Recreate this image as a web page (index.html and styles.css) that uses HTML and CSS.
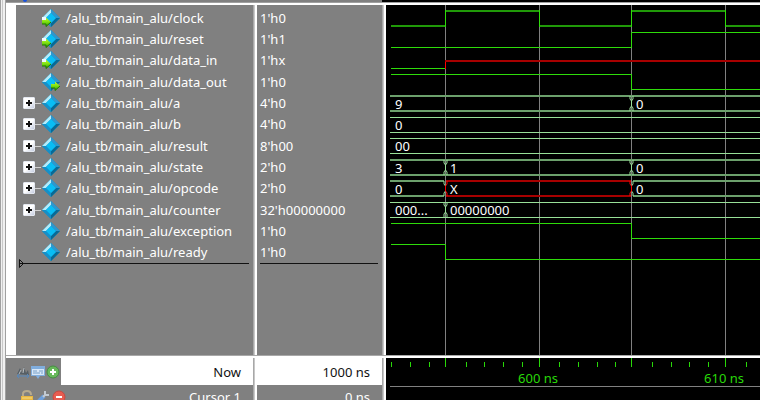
FILE: index.html
```html
<!DOCTYPE html>
<html lang="en">
<head>
<meta charset="utf-8">
<title>Wave</title>
<link rel="stylesheet" href="styles.css">
</head>
<body>
<svg class="defs" aria-hidden="true">
  <defs>
    <linearGradient id="green" x2="0" y2="1"><stop offset="0" stop-color="#c4fa30"/><stop offset=".5" stop-color="#7be010"/><stop offset="1" stop-color="#2b9600"/></linearGradient>
    <symbol id="diamond" viewBox="0 0 20 20">
      <path d="M10 1L1 10l9 9 9-9z" fill="#078fc6"/>
      <path d="M10 1L1 10h4l5-5z" fill="#b4ebfa"/>
      <path d="M10 1l9 9h-4l-5-5z" fill="#3196cc"/>
      <path d="M1 10l9 9v-4l-5-5z" fill="#168fc8"/>
      <path d="M19 10l-9 9v-4l5-5z" fill="#086a96"/>
      <path d="M10 5l-5 5 5 5 5-5z" fill="#09bdf4"/>
    </symbol>
    <symbol id="port-in" viewBox="0 0 20 20">
      <use href="#diamond"/>
      <path d="M1 9h4v3H1z" fill="#eefaff"/>
      <path d="M1 12h4V9.500l5 4.500-5 4.500V16H1z" fill="url(#green)"/>
      <path d="M1 16h4v2.500l5-4.500" fill="none" stroke="#1f7a00"/>
    </symbol>
    <symbol id="port-out" viewBox="0 0 20 20">
      <use href="#diamond"/>
      <path d="M10 12h4V9.500l5 4.500-5 4.500V16h-4z" fill="url(#green)"/>
      <path d="M10 16h4v2.500l5-4.500" fill="none" stroke="#1f7a00"/>
    </symbol>
  </defs>
</svg>
<main class="wave-window">
  <div class="title-edge"><span class="title-dot"></span></div>
  <div class="frame"></div>

  <section class="pane names" aria-label="Signals">
    <ul class="rows">
      <li><span class="tree"></span><svg class="icon"><use href="#port-in"/></svg>/alu_tb/main_alu/clock</li>
      <li><span class="tree"></span><svg class="icon"><use href="#port-in"/></svg>/alu_tb/main_alu/reset</li>
      <li><span class="tree"></span><svg class="icon"><use href="#port-in"/></svg>/alu_tb/main_alu/data_in</li>
      <li><span class="tree"></span><svg class="icon"><use href="#port-out"/></svg>/alu_tb/main_alu/data_out</li>
      <li><span class="tree branch"><button class="expand" aria-label="Expand a"></button></span><svg class="icon"><use href="#diamond"/></svg>/alu_tb/main_alu/a</li>
      <li><span class="tree branch"><button class="expand" aria-label="Expand b"></button></span><svg class="icon"><use href="#diamond"/></svg>/alu_tb/main_alu/b</li>
      <li><span class="tree branch"><button class="expand" aria-label="Expand result"></button></span><svg class="icon"><use href="#diamond"/></svg>/alu_tb/main_alu/result</li>
      <li><span class="tree branch"><button class="expand" aria-label="Expand state"></button></span><svg class="icon"><use href="#diamond"/></svg>/alu_tb/main_alu/state</li>
      <li><span class="tree branch"><button class="expand" aria-label="Expand opcode"></button></span><svg class="icon"><use href="#diamond"/></svg>/alu_tb/main_alu/opcode</li>
      <li><span class="tree branch"><button class="expand" aria-label="Expand counter"></button></span><svg class="icon"><use href="#diamond"/></svg>/alu_tb/main_alu/counter</li>
      <li><span class="tree"></span><svg class="icon"><use href="#diamond"/></svg>/alu_tb/main_alu/exception</li>
      <li><span class="tree"></span><svg class="icon"><use href="#diamond"/></svg>/alu_tb/main_alu/ready</li>
    </ul>
    <div class="insert-mark"><svg class="insert-arrow" viewBox="0 0 5 9"><path d="M.5 .5v8l4-4z" fill="none" stroke="#111"/></svg></div>
  </section>
  <div class="splitter"></div>
  <section class="pane values" aria-label="Values">
    <ul class="rows">
      <li>1'h0</li><li>1'h1</li><li>1'hx</li><li>1'h0</li><li>4'h0</li><li>4'h0</li>
      <li>8'h00</li><li>2'h0</li><li>2'h0</li><li>32'h00000000</li><li>1'h0</li><li>1'h0</li>
    </ul>
    <div class="insert-mark"></div>
  </section>
  <div class="splitter"></div>
  <section class="pane waves" aria-label="Waveforms">
    <svg class="plot">
      <path class="grid" d="M59.5 0V2000M153.5 0V2000M245.5 0V2000M339.5 0V2000"/>
      <path class="clock" d="M5 21H59M60 6H153M154 21H245M246 6H339M340 21H4000"/>
      <path class="edge" d="M59.5 5V22M153.5 5V22M245.5 5V22M339.5 5V22"/>
      <path class="bit" d="M5 42.5H245.5V27.5H4000"/>
      <path class="bit" d="M5 63.5H59.5"/>
      <path class="unknown" d="M59.5 64V56"/>
      <path class="unknown-level" d="M59 56H4000"/>
      <path class="bit" d="M5 69.5H245.5V84.5H4000"/>
      <path class="bus soft" d="M4 91H4000M4 106H4000"/>
      <path class="bus" d="M4 112.5H4000M4 127.5H4000"/>
      <path class="bus" d="M4 133.5H4000M4 148.5H4000"/>
      <path class="bus soft" d="M4 155H4000M4 170H4000"/>
      <path class="bus soft" d="M4 176H58M4 191H58M247 176H4000M247 191H4000"/>
      <path class="unknown-level" d="M60 176H245M60 191H245"/>
      <path class="bus" d="M4 197.5H4000M4 212.5H4000"/>
      <path class="change" d="M244 91v3l1.500 2v5l-1.500 2v3M247 91v3l-1.500 2v5l1.500 2v3"/>
      <path class="change" d="M58 155v3l1.500 2v5l-1.500 2v3M61 155v3l-1.500 2v5l1.500 2v3"/>
      <path class="change" d="M244 155v3l1.500 2v5l-1.500 2v3M247 155v3l-1.500 2v5l1.500 2v3"/>
      <path class="change" d="M58 176v3l1.500 2v5l-1.500 2v3M247 176v3l-1.500 2v5l1.500 2v3"/>
      <path class="unknown" d="M61 176v3l-1.500 2v5l1.500 2v3M244 176v3l1.500 2v5l-1.500 2v3"/>
      <path class="change" d="M58 197v3l1.500 2v5l-1.500 2v4M61 197v3l-1.500 2v5l1.500 2v4"/>
      <path class="bit" d="M5 218.500H245.500V233.500H4000"/>
      <path class="bit" d="M5 239.500H59.500V254.500H4000"/>
      <g class="bus-value">
        <text x="9" y="104">9</text><text x="250" y="104">0</text>
        <text x="9" y="125">0</text>
        <text x="9" y="146">00</text>
        <text x="9" y="168">3</text><text x="64" y="168">1</text><text x="250" y="168">0</text>
        <text x="9" y="189">0</text><text x="64" y="189">X</text><text x="250" y="189">0</text>
        <text x="9" y="210">000...</text><text x="64" y="210">00000000</text>
      </g>
    </svg>
  </section>

  <div class="divider"></div>
  <section class="footer names-footer">
    <div class="foot-row now">
      <span class="tools">
        <svg class="tool" viewBox="0 0 14 14"><path d="M1 9l3-6 2 5 2-6 2 6 2-3 1 5z" fill="#555e65"/><path d="M3 9l2-4M7 8l1-5" stroke="#b8bdc0" fill="none"/><path d="M1 11h12M3 9l-2 2 2 2M11 9l2 2-2 2" stroke="#5688bd" fill="none"/></svg>
        <svg class="tool" viewBox="0 0 14 14"><path d="M0 1h14v10H9l-2 3-2-3H0z" fill="#80addd"/><path d="M1 4h12v6H1z" fill="#d7e7f7"/><path d="M2 6h4M8 6h4M2 8h7M10 8h2" stroke="#779fc8"/></svg>
        <svg class="tool" viewBox="0 0 14 14"><circle cx="7" cy="7" r="6" fill="#68b85b" stroke="#438e41"/><path d="M7 4v6M4 7h6" stroke="#fff" stroke-width="2"/></svg>
      </span>
      <span class="foot-label">Now</span>
    </div>
    <div class="foot-row cursor">
      <span class="tools">
        <svg class="tool" viewBox="0 0 14 14"><path d="M3 6V4q0-3 4-3t4 4" fill="none" stroke="#b8aa8d" stroke-width="2"/><path d="M1 6h12v8H1z" fill="#e8b642"/><path d="M2 8h10" stroke="#f9dc80"/></svg>
        <svg class="tool" viewBox="0 0 14 14"><path d="M1 13l7-7" stroke="#6d9fdb" stroke-width="4"/><path d="M7 7l3-3M9 1v4h4" fill="none" stroke="#c2c9d1" stroke-width="2"/></svg>
        <svg class="tool" viewBox="0 0 14 14"><circle cx="7" cy="7" r="6" fill="#e75c50" stroke="#c94840"/><path d="M4 7h6" stroke="#fff" stroke-width="2"/></svg>
      </span>
      <span class="foot-label">Cursor 1</span>
    </div>
  </section>
  <div class="splitter"></div>
  <section class="footer">
    <div class="foot-row now"><span class="foot-label">1000 ns</span></div>
    <div class="foot-row cursor"><span class="foot-label">0 ns</span></div>
  </section>
  <div class="splitter"></div>
  <section class="footer timeline" aria-label="Timeline">
    <svg class="plot">
      <path class="tick" d="M5.500 4v5M24.500 4v5M43.500 4v5M59.500 0v9M80.500 4v5M98.500 4v5M117.500 4v5M136.500 4v5M153.500 0v9M173.500 4v5M192.500 4v5M211.500 4v5M229.500 4v5M245.500 0v9M266.500 4v5M285.500 4v5M303.500 4v5M322.500 4v5M339.500 0v9M360.500 4v5"/>
      <path class="baseline" d="M4 28.500H4000"/>
      <g class="time"><text x="152" y="25">600 ns</text><text x="338" y="25">610 ns</text></g>
    </svg>
  </section>
</main>
</body>
</html>
```
FILE: styles.css
```css
* { box-sizing: border-box; }

body {
  margin: 0;
  font-family: "Noto Sans", "DejaVu Sans Condensed", sans-serif;
  font-size: 13px;
  line-height: 18px;
  color: #fff;
  background: #808080;
}

.defs { position: absolute; width: 0; height: 0; }

.wave-window {
  display: grid;
  grid-template-columns: 6px 247px 4px 125px 4px minmax(0, 1fr);
  grid-template-rows: 5px minmax(0, 1fr) 3px 42px;
  height: 100vh;
  overflow: hidden;
}

.frame {
  grid-column: 1;
  grid-row: 1 / -1;
  background: linear-gradient(90deg, #a0a0a0 0 1px, #f0f0f0 1px 2px, #c8c8c8 2px 3px, #f0f0f0 3px 5px, #a0a0a0 5px);
}

.title-edge {
  grid-column: 2 / -1;
  grid-row: 1;
  display: flex;
  padding-left: 17px;
  background:
    linear-gradient(#a0a0a0 0 1px, #fff 1px) 0 2px / 100% 3px no-repeat,
    linear-gradient(90deg, #808080 376px, #000 376px);
}

.title-dot {
  width: 4px;
  height: 2px;
  border-radius: 0 0 2px 2px;
  background: #1550e0;
}

.pane { min-width: 0; overflow: hidden; padding-top: 2px; }
.names { border-left: 10px solid #fff; }
.waves { padding: 0; background: #000; }

.splitter { background: linear-gradient(90deg, #a8a8a8 0 1px, #c8c8c8 1px 2px, #fff 2px); }

.divider {
  grid-column: 2 / -1;
  background: linear-gradient(#a8a8a8 0 1px, #fff 1px);
}

.rows {
  display: grid;
  grid-template-rows: repeat(12, 1fr);
  height: 256px;
  margin: 0;
  padding: 0;
  list-style: none;
}

.rows li { display: flex; align-items: center; white-space: nowrap; }
.names li { padding-left: 7px; }
.values li { padding-left: 3px; }

.tree { flex: none; width: 18px; height: 12px; }
.branch { background: linear-gradient(#d0d0d0, #d0d0d0) 0 6px / 100% 1px no-repeat; }

.expand {
  display: block;
  width: 12px;
  height: 12px;
  padding: 0;
  border: 1px solid #e4e8f0;
  border-radius: 1px;
  background:
    linear-gradient(#111, #111) center / 6px 2px no-repeat,
    linear-gradient(#111, #111) center / 2px 6px no-repeat,
    linear-gradient(135deg, #fff 50%, #c4cce0);
}

.icon { flex: none; width: 20px; height: 20px; margin-right: 5px; }

.insert-mark {
  position: relative;
  height: 1px;
  margin: 0 4px 0 3px;
  background: #111;
}

.insert-arrow { position: absolute; left: 0; top: -4px; width: 5px; height: 9px; }

.plot { display: block; width: 100%; height: 100%; }
.plot path { fill: none; }
.grid { stroke: #808080; }
.bit, .edge { stroke: #2edc0a; }
.clock { stroke: #209a08; stroke-width: 2; }
.bus, .change { stroke: #98e098; }
.soft { stroke: #6ca06c; stroke-width: 2; }
.unknown { stroke: #f00; }
.unknown-level { stroke: #a80000; stroke-width: 2; }
.bus-value { fill: #fff; }

.footer { min-width: 0; overflow: hidden; }
.foot-row { display: flex; align-items: center; justify-content: flex-end; }
.now { height: 27px; color: #111; background: #fff; }
.cursor { height: 24px; }
.tools { display: flex; align-items: center; gap: 1px; height: 100%; }
.names-footer .tools { margin-right: auto; }
.now .tools { padding: 0 1px 0 10px; background: #808080; }
.cursor .tools { gap: 2px; padding-left: 14px; }
.tool { width: 14px; height: 14px; }
.foot-label { padding-right: 12px; }

.timeline { background: #000; }
.tick { stroke: #28d808; }
.baseline { stroke: #808080; }
.time { fill: #28d808; text-anchor: middle; }
```
